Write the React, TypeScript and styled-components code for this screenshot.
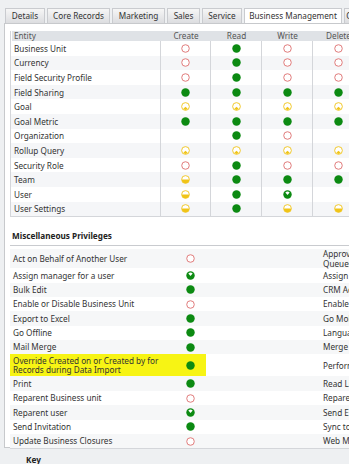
import styled, { createGlobalStyle } from 'styled-components';

type Level = 'none' | 'user' | 'bu' | 'pcbu' | 'org' | '';

const GlobalStyle = createGlobalStyle`
  html, body {
    margin: 0;
    padding: 0;
    overflow: hidden;
    background: #eef0f2;
    font-family: "Noto Sans", "Open Sans", sans-serif;
    color: #333;
  }
`;

const Page = styled.div`
  width: 349px;
  height: 464px;
  overflow: hidden;
  padding-top: 8px;
  box-sizing: border-box;
`;

const TabStrip = styled.div`
  display: flex;
  padding-left: 5px;
  height: 15px;
  white-space: nowrap;
`;

const Tab = styled.div<{ $w: number; $active?: boolean }>`
  flex: 0 0 ${(p) => p.$w}px;
  box-sizing: border-box;
  margin-right: 2px;
  border: 1px solid #c9cbcf;
  border-bottom: none;
  background: ${(p) => (p.$active ? '#ffffff' : 'linear-gradient(#f6f6f6, #dcdde0)')};
  font-size: 8.2px;
  line-height: 14px;
  text-align: center;
  color: #333;
  overflow: hidden;
`;

const Panel = styled.div`
  width: 400px;
  height: 425px;
  margin-left: 4px;
  border: 1px solid #c7c9cc;
  border-right: none;
  background: #ffffff;
  padding: 7px 0 0 5px;
  box-sizing: border-box;
`;

const EntityTable = styled.div`
  display: grid;
  grid-template-columns: 150px 50px 51px 51px 51px;
  border-left: 1px solid #d4d6da;
  border-bottom: 1px solid #d4d6da;
  width: 353px;
`;

const HeadCell = styled.div<{ $left?: boolean }>`
  background: #dfe2e6;
  height: 10px;
  line-height: 10px;
  margin-left: ${(p) => (p.$left ? '1px' : '0')};
  padding-left: ${(p) => (p.$left ? '2px' : '0')};
  text-align: ${(p) => (p.$left ? 'left' : 'center')};
  font-size: 8.2px;
  color: #555;
`;

const Cell = styled.div<{ $alt: boolean; $left?: boolean }>`
  height: 14.6px;
  display: flex;
  align-items: center;
  justify-content: ${(p) => (p.$left ? 'flex-start' : 'center')};
  padding-left: ${(p) => (p.$left ? '3px' : '0')};
  background: ${(p) => (p.$alt ? '#f5f6f8' : '#ffffff')};
  border-right: 1px solid #d4d6da;
  font-size: 8.2px;
  color: #333;
  white-space: nowrap;
`;

const MiscTitle = styled.div`
  margin-top: 13px;
  padding: 0 0 4px 2px;
  border-bottom: 1px solid #c9cbcf;
  font-size: 8.2px;
  font-weight: 700;
  color: #222;
  width: 360px;
`;

const MiscList = styled.div`
  margin-top: 3px;
  width: 380px;
  border-bottom: 1px solid #d4d6da;
`;

const MiscRow = styled.div<{ $alt: boolean; $h: number; $mark?: boolean }>`
  display: grid;
  grid-template-columns: 170px 20px 123px 67px;
  align-items: center;
  height: ${(p) => p.$h}px;
  background: ${(p) =>
    p.$mark
      ? 'linear-gradient(to right, #f7f414 0, #f7f414 196px, #ffffff 196px)'
      : p.$alt
        ? '#f6f7f8'
        : '#ffffff'};
  font-size: 8.2px;
  line-height: 9.6px;
  color: #333;
`;

const MiscLabel = styled.div<{ $right?: boolean }>`
  grid-column: ${(p) => (p.$right ? 4 : 1)};
  padding-left: ${(p) => (p.$right ? '0' : '3px')};
  white-space: nowrap;
`;

const MiscIcon = styled.div`
  display: flex;
  justify-content: center;
`;

const KeyTitle = styled.div`
  margin: 6px 0 0 26px;
  font-size: 8.2px;
  font-weight: 700;
  color: #222;
`;

const Dot = ({ level }: { level: Level }) => {
  if (!level) return null;
  const s = 9;
  if (level === 'none')
    return (
      <svg width={s} height={s} viewBox="0 0 10 10">
        <circle cx="5" cy="5" r="4.2" fill="#fff" stroke="#e07a7a" strokeWidth="1.1" />
      </svg>
    );
  if (level === 'org')
    return (
      <svg width={s} height={s} viewBox="0 0 10 10">
        <circle cx="5" cy="5" r="4.7" fill="#0c8a12" />
      </svg>
    );
  if (level === 'pcbu')
    return (
      <svg width={s} height={s} viewBox="0 0 10 10">
        <circle cx="5" cy="5" r="4.7" fill="#0c8a12" />
        <path d="M2.6 2.8 L5 5.6 L7.4 2.8 A3.4 3.4 0 0 0 2.6 2.8 Z" fill="#fff" />
      </svg>
    );
  if (level === 'bu')
    return (
      <svg width={s} height={s} viewBox="0 0 10 10">
        <circle cx="5" cy="5" r="4.3" fill="#fff" stroke="#f0c418" strokeWidth="1" />
        <path d="M0.9 5 A4.1 4.1 0 0 0 9.1 5 Z" fill="#f0c418" />
      </svg>
    );
  return (
    <svg width={s} height={s} viewBox="0 0 10 10">
      <circle cx="5" cy="5" r="4.3" fill="#fff" stroke="#f0c418" strokeWidth="1" />
      <path d="M2.6 7.6 A3.4 3.4 0 0 0 7.4 7.6 L5 5.2 Z" fill="#f0c418" />
    </svg>
  );
};

const entities: [string, Level, Level, Level, Level][] = [
  ['Business Unit', 'none', 'org', 'none', 'none'],
  ['Currency', 'none', 'org', 'none', 'none'],
  ['Field Security Profile', 'none', 'org', 'none', 'none'],
  ['Field Sharing', 'org', 'org', 'org', 'org'],
  ['Goal', 'user', 'user', 'user', 'user'],
  ['Goal Metric', 'org', 'org', 'org', 'org'],
  ['Organization', '', 'org', 'none', ''],
  ['Rollup Query', 'user', 'user', 'user', 'user'],
  ['Security Role', 'none', 'org', 'none', 'none'],
  ['Team', 'bu', 'org', 'org', 'org'],
  ['User', 'bu', 'org', 'pcbu', ''],
  ['User Settings', 'bu', 'org', 'bu', 'bu'],
];

type Misc = { label: React.ReactNode; level: Level; right: React.ReactNode; h?: number; mark?: boolean };

const misc: Misc[] = [
  { label: 'Act on Behalf of Another User', level: 'none', right: <>Approve Email Addresses<br />Queues</>, h: 19 },
  { label: 'Assign manager for a user', level: 'pcbu', right: 'Assign Territory to User' },
  { label: 'Bulk Edit', level: 'org', right: 'CRM Address Book' },
  { label: 'Enable or Disable Business Unit', level: 'none', right: 'Enable or Disable User' },
  { label: 'Export to Excel', level: 'org', right: 'Go Mobile' },
  { label: 'Go Offline', level: 'org', right: 'Language Settings' },
  { label: 'Mail Merge', level: 'org', right: 'Merge' },
  {
    label: <>Override Created on or Created by for<br />Records during Data Import</>,
    level: 'org',
    right: 'Perform in sync entities',
    h: 22,
    mark: true,
  },
  { label: 'Print', level: 'org', right: 'Read License info' },
  { label: 'Reparent Business unit', level: 'none', right: 'Reparent team' },
  { label: 'Reparent user', level: 'pcbu', right: 'Send Email as Another User' },
  { label: 'Send Invitation', level: 'org', right: 'Sync to Outlook' },
  { label: 'Update Business Closures', level: 'none', right: 'Web Mail Merge' },
];

const tabs: [string, number, boolean?][] = [
  ['Details', 40],
  ['Core Records', 63],
  ['Marketing', 53],
  ['Sales', 33],
  ['Service', 40],
  ['Business Management', 98, true],
  ['Customization', 60],
];

const App = () => {
  return (
    <Page>
      <GlobalStyle />
      <TabStrip>
        {tabs.map(([t, w, a]) => (
          <Tab key={t} $w={w} $active={a}>
            {t}
          </Tab>
        ))}
      </TabStrip>
      <Panel>
        <EntityTable>
          <HeadCell $left>Entity</HeadCell>
          <HeadCell>Create</HeadCell>
          <HeadCell>Read</HeadCell>
          <HeadCell>Write</HeadCell>
          <HeadCell>Delete</HeadCell>
          {entities.map(([name, ...levels], i) => [
            <Cell key={name} $alt={i % 2 === 1} $left>
              {name}
            </Cell>,
            ...levels.map((l, j) => (
              <Cell key={name + j} $alt={i % 2 === 1}>
                <Dot level={l} />
              </Cell>
            )),
          ])}
        </EntityTable>
        <MiscTitle>Miscellaneous Privileges</MiscTitle>
        <MiscList>
          {misc.map((m, i) => (
            <MiscRow key={i} $alt={i % 2 === 0} $h={m.h ?? 14.4} $mark={m.mark}>
              <MiscLabel>{m.label}</MiscLabel>
              <MiscIcon>
                <Dot level={m.level} />
              </MiscIcon>
              <MiscLabel $right>{m.right}</MiscLabel>
            </MiscRow>
          ))}
        </MiscList>
      </Panel>
      <KeyTitle>Key</KeyTitle>
    </Page>
  );
};

export default App;
